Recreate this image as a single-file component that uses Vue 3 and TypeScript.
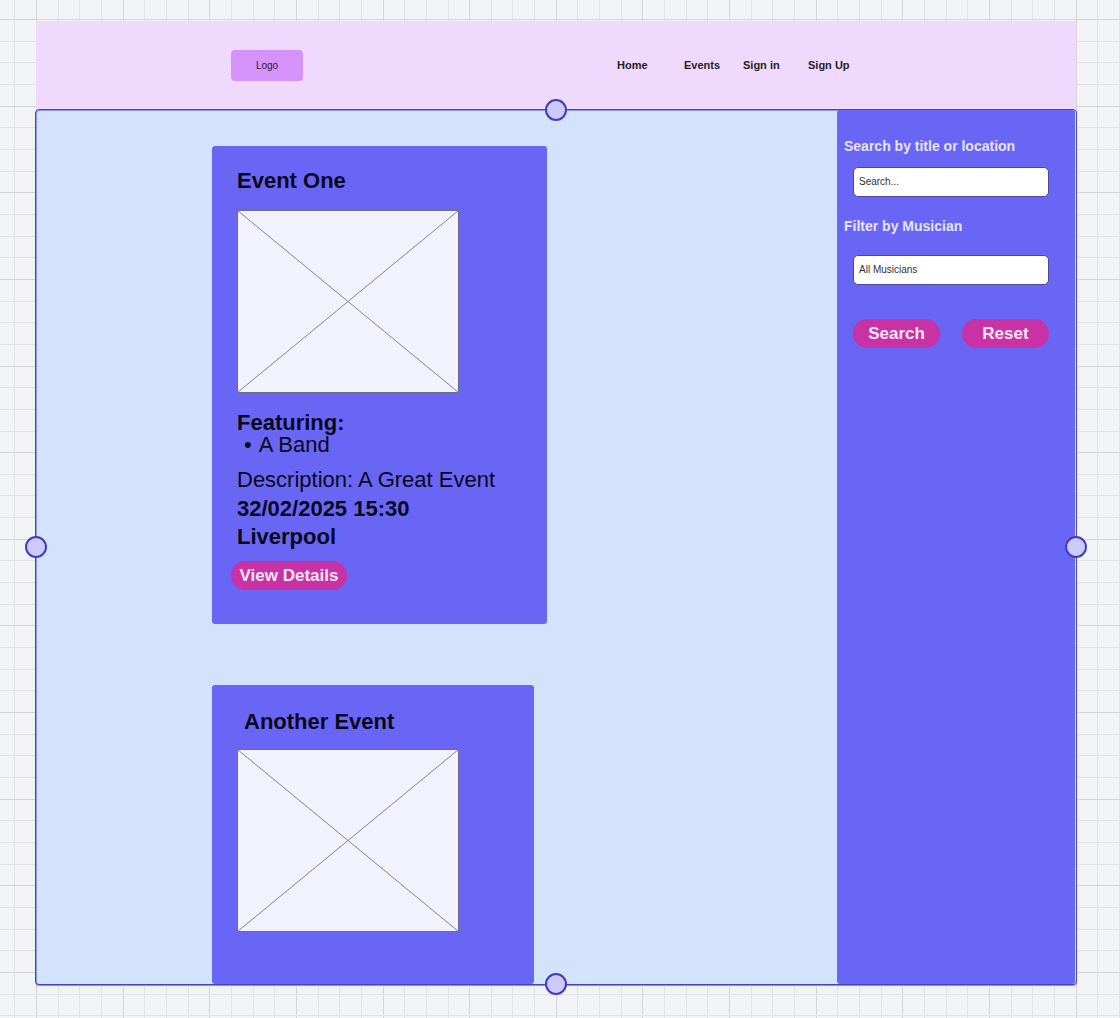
<script setup lang="ts">
import { ref } from 'vue'

interface EventItem {
  title: string
  indented?: boolean
  featuring?: string[]
  description?: string
  date?: string
  place?: string
}

const links: string[] = ['Home', 'Events', 'Sign in', 'Sign Up']

const events: EventItem[] = [
  {
    title: 'Event One',
    featuring: ['A Band'],
    description: 'A Great Event',
    date: '32/02/2025 15:30',
    place: 'Liverpool',
  },
  { title: 'Another Event', indented: true },
]

const handles: string[] = ['top', 'right', 'bottom', 'left']

const query = ref('')
const musician = ref('all')

// Canvas grid at the current zoom level: every fourth line is a major one.
interface GridLine {
  at: number
  major: boolean
}

const GRID_STEP = 21.659

function gridLines(origin: number, count: number): GridLine[] {
  return Array.from({ length: count }, (_, i) => ({
    at: Math.round(origin + (i - 1) * GRID_STEP),
    major: (i - 1) % 4 === 0,
  })).sort((a, b) => Number(a.major) - Number(b.major))
}

const columns = gridLines(36, 180)
const rows = gridLines(19, 120)
</script>

<template>
  <div class="canvas">
    <svg class="grid" aria-hidden="true">
      <rect v-for="c in columns" :key="'c' + c.at" :x="c.at" y="0" width="1" height="100%" :class="{ major: c.major }" />
      <rect v-for="r in rows" :key="'r' + r.at" x="0" :y="r.at" width="100%" height="1" :class="{ major: r.major }" />
    </svg>

    <header class="header">
      <a class="logo" href="#">Logo</a>
      <nav class="nav">
        <a v-for="link in links" :key="link" href="#">{{ link }}</a>
      </nav>
    </header>

    <div class="frame">
      <main class="events">
        <article v-for="event in events" :key="event.title" class="card">
          <h2 :class="{ indented: event.indented }">{{ event.title }}</h2>
          <svg class="picture" viewBox="0 0 222 183" aria-hidden="true">
            <rect x="0.5" y="0.5" width="221" height="182" />
            <path d="M0.5 0.5 L221.5 182.5 M221.5 0.5 L0.5 182.5" />
          </svg>
          <template v-if="event.featuring">
            <h3>Featuring:</h3>
            <ul>
              <li v-for="act in event.featuring" :key="act">{{ act }}</li>
            </ul>
            <p class="description">Description: {{ event.description }}</p>
            <p class="strong">{{ event.date }}</p>
            <p class="strong">{{ event.place }}</p>
            <button class="pill details" type="button">View Details</button>
          </template>
        </article>
      </main>

      <aside class="sidebar">
        <form @submit.prevent>
          <label for="query">Search by title or location</label>
          <input id="query" v-model="query" class="field" type="text" placeholder="Search..." />
          <label class="second" for="musician">Filter by Musician</label>
          <select id="musician" v-model="musician" class="field spaced">
            <option value="all">All Musicians</option>
          </select>
          <div class="actions">
            <button class="pill" type="submit">Search</button>
            <button class="pill" type="reset">Reset</button>
          </div>
        </form>
      </aside>

      <span v-for="side in handles" :key="side" class="handle" :class="side"></span>
    </div>
  </div>
</template>

<style>
body {
  margin: 0;
}
</style>

<style scoped>
* {
  box-sizing: border-box;
}

.canvas {
  position: relative;
  display: flex;
  flex-direction: column;
  min-height: 100vh;
  padding: 21px 43px 33px 35px;
  overflow: hidden;
  background: #f2f3f5;
  color: #08081a;
  font-family: "Liberation Sans", Arial, sans-serif;
}

.grid {
  position: absolute;
  inset: 0;
  width: 100%;
  height: 100%;
  fill: #e2e3e5;
}

.grid .major {
  fill: #d3d5d7;
}

.header {
  position: relative;
  display: flex;
  align-items: center;
  height: 88px;
  margin: 0 1px;
  padding-left: 195px;
  background: #efd9fc;
}

.logo {
  display: flex;
  align-items: center;
  justify-content: center;
  width: 72px;
  height: 31px;
  border-radius: 4px;
  background: #d592fa;
  color: #2a1d32;
  font-size: 10px;
  text-decoration: none;
}

.nav {
  display: grid;
  grid-template-columns: 67px 59px 65px auto;
  margin-left: 314px;
  font-size: 11px;
  font-weight: bold;
  line-height: 14px;
}

.nav a {
  color: #241f27;
  text-decoration: none;
  white-space: nowrap;
}

.frame {
  position: relative;
  display: flex;
  flex: 1;
  border: 1px solid #4643c4;
  border-radius: 4px;
  background: #d3e3fc;
  box-shadow: inset 1px 1px 0 #8d97e0, 0 1px 0 #8f8edb;
}

.events {
  display: flex;
  flex: 1;
  flex-direction: column;
  align-items: flex-start;
  gap: 61px;
  padding: 36px 0 0 176px;
}

.card {
  width: 335px;
  padding: 22px 25px 34px;
  border-radius: 3px;
  background: #6965f5;
  font-size: 22px;
  line-height: 28px;
}

.card:last-child {
  flex: 1;
  width: 322px;
}

h2,
h3,
p,
ul {
  margin: 0;
  padding: 0;
  font-size: 22px;
}

h2 {
  margin-bottom: 16px;
  line-height: 26px;
}

h2.indented {
  margin-bottom: 14px;
  padding: 2px 0 0 7px;
}

h3 {
  margin-top: 19px;
  line-height: 22px;
}

ul {
  margin-bottom: 10px;
  padding-left: 7px;
  line-height: 22px;
  list-style: none;
}

li {
  display: flex;
  gap: 7px;
}

li::before {
  content: "•";
}

p {
  white-space: nowrap;
}

.description {
  margin-bottom: 1px;
}

.strong {
  font-weight: bold;
}

.picture {
  display: block;
  width: 222px;
  height: 183px;
  fill: #f2f2ff;
  stroke: #6c6c84;
}

.picture path {
  stroke: #85858f;
}

.pill {
  width: 87px;
  height: 29px;
  padding: 0;
  border: 0;
  border-radius: 15px;
  background: #c832a5;
  color: #fae6f8;
  font-family: inherit;
  font-size: 17px;
  font-weight: bold;
  line-height: 20px;
}

.details {
  display: block;
  width: 116px;
  margin: 10px 0 0 -6px;
}

.sidebar {
  width: 238px;
  margin-right: 1px;
  padding: 26px 26px 0 7px;
  border-radius: 3px;
  background: #6965f5;
}

label {
  display: block;
  color: #e6e4fd;
  font-size: 14px;
  font-weight: bold;
  line-height: 20px;
  white-space: nowrap;
}

.second {
  margin-top: 19px;
}

.field {
  display: block;
  width: 196px;
  height: 30px;
  margin: 11px 0 0 9px;
  padding: 0 5px 2px;
  border: 1px solid #4b489c;
  border-radius: 5px;
  background: #fff;
  color: #333;
  font-family: inherit;
  font-size: 10px;
  appearance: none;
}

.field::placeholder {
  color: #333;
  opacity: 1;
}

.spaced {
  margin-top: 19px;
}

.actions {
  display: flex;
  justify-content: space-between;
  width: 196px;
  margin: 34px 0 0 9px;
}

.handle {
  position: absolute;
  width: 22px;
  height: 22px;
  border: 2px solid #3f3cbd;
  border-radius: 50%;
  background: #cdc9fb;
  transform: translate(-50%, -50%);
}

.top {
  top: 0;
  left: 50%;
}

.right {
  top: 50%;
  left: 100%;
}

.bottom {
  top: 100%;
  left: 50%;
}

.left {
  top: 50%;
  left: 0;
}
</style>
